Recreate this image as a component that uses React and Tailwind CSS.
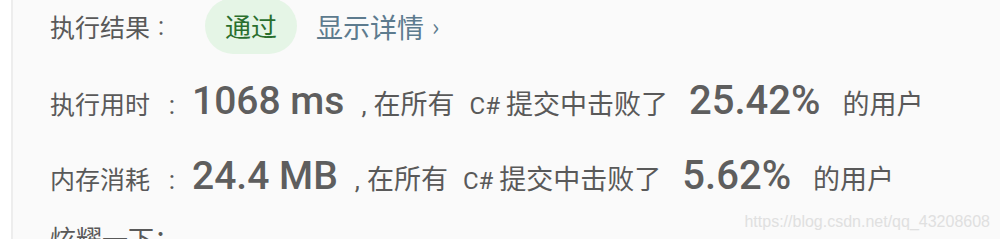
export default function App() {
  const cjk = { fontFamily: '"Noto Sans CJK SC", "Noto Sans", sans-serif' }
  const num = { fontFamily: 'Roboto, "Noto Sans", sans-serif' }

  const stats = [
    { label: '执行用时', value: '1068 ms', pct: '25.42%' },
    { label: '内存消耗', value: '24.4 MB', pct: '5.62%' },
  ]

  return (
    <div className="relative flex h-[239px] w-[1000px] overflow-hidden bg-white" style={cjk}>
      {/* left gutter */}
      <div className="w-[13px] shrink-0 bg-white border-r-2 border-[#ededed]" />

      <div className="flex-1 bg-[#fafafa] pl-[37px] text-[#595959]">
        {/* result row */}
        <div className="flex h-[52px] items-center leading-none">
          <span className="text-[25px]">执行结果</span>
          <span className="ml-[5px] w-[12px] text-center text-[25px]" style={num}>:</span>
          <span className="ml-[38px] flex h-[56px] w-[92px] items-center justify-center rounded-full bg-[#e5f5e6] text-[26px] text-[#2b6f2e]">
            通过
          </span>
          <span className="ml-[19px] flex items-center text-[27px] text-[#5d7b8e]">
            显示详情
            <span className="ml-[8px] text-[24px]">›</span>
          </span>
        </div>

        {/* stat rows */}
        <div className="mt-[11px]">
          {stats.map((s) => (
            <div key={s.label} className="flex h-[75px] items-center">
              <div className="flex items-baseline text-[27px]">
                <span className="text-[25px]">{s.label}</span>
                <span className="ml-[16px] w-[12px] text-center text-[26px]" style={num}>:</span>
                <span className="ml-[14px] text-[39px] font-medium text-[#5e5e5e]" style={num}>
                  {s.value}
                </span>
                <span className="ml-[17px] text-[26px]" style={num}>,</span>
                <span className="ml-[7px]">在所有</span>
                <span className="ml-[15px] text-[24px]" style={num}>C#</span>
                <span className="ml-[6px]">提交中击败了</span>
                <span className="ml-[21px] text-[40px] font-medium text-[#5e5e5e]" style={num}>
                  {s.pct}
                </span>
                <span className="ml-[22px]">的用户</span>
              </div>
            </div>
          ))}
        </div>

        <div className="pt-[12px] text-[26px] leading-none">炫耀一下：</div>
      </div>

      {/* watermark */}
      <div
        className="pointer-events-none absolute bottom-[5px] right-[10px] text-[16px] text-[#e0e0e0]"
        style={{ fontFamily: '"Liberation Sans", Arial, sans-serif' }}
      >
        https://blog.csdn.net/qq_43208608
      </div>
    </div>
  )
}
